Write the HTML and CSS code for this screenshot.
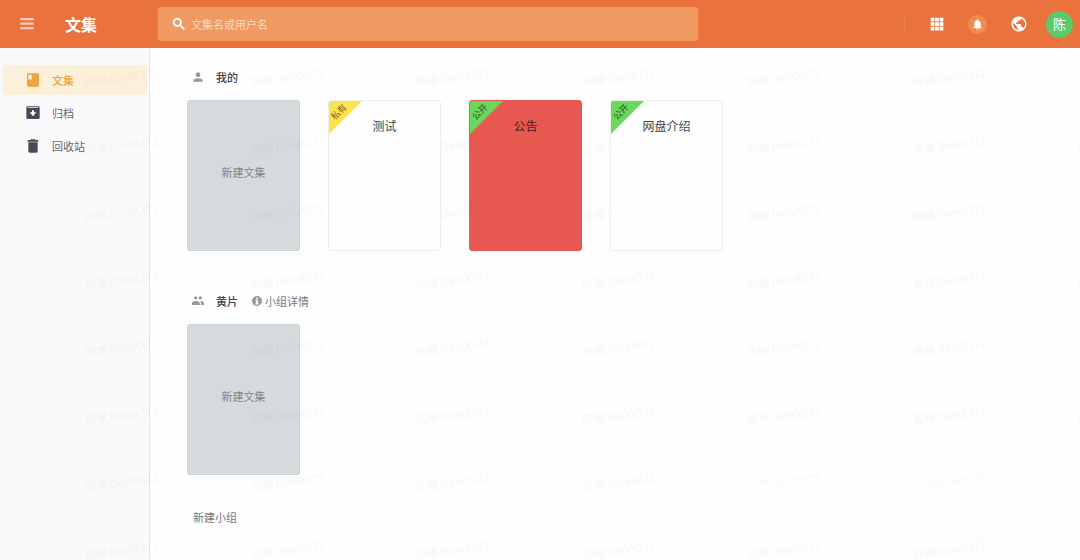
FILE: index.html
```
<!DOCTYPE html>
<html lang="zh-CN">
<head>
  <meta charset="UTF-8">
  <meta name="viewport" content="width=device-width, initial-scale=1.0">
  <title>文集</title>
  <link rel="stylesheet" href="styles.css">
</head>
<body>

  <header class="topbar">
    <div class="brand">
      <button class="menu-btn" aria-label="菜单">
        <svg viewBox="0 0 24 24"><path d="M3 19h18v-3H3v3zm0-6h18v-3H3v3zm0-9v3h18V4H3z"/></svg>
      </button>
      <h1>文集</h1>
    </div>
    <label class="search">
      <svg viewBox="0 0 24 24"><path d="M15.5 14h-.8l-.3-.3A6.5 6.5 0 1 0 13.7 14.400l.3.3v.8l5 5 1.500-1.500-5-5zm-6 0a4.500 4.500 0 1 1 0-9 4.500 4.500 0 0 1 0 9z"/></svg>
      <input type="text" placeholder="文集名或用户名" aria-label="搜索">
    </label>
    <div class="tools">
      <span class="divider"></span>
      <button class="tool" aria-label="应用">
        <svg viewBox="0 0 24 24"><path d="M3.500 8.500h5v-5h-5v5zm6 12h5v-5h-5v5zm-6 0h5v-5h-5v5zm0-6h5v-5h-5v5zm6 0h5v-5h-5v5zm6-11v5h5v-5h-5zm-6 5h5v-5h-5v5zm6 6h5v-5h-5v5zm0 6h5v-5h-5v5z"/></svg>
      </button>
      <button class="tool bell" aria-label="通知">
        <svg viewBox="0 0 24 24"><path d="M12 22c1.100 0 2-.9 2-2h-4c0 1.100.9 2 2 2zm6-6v-5c0-3.070-1.640-5.640-4.500-6.320V4c0-.83-.67-1.500-1.500-1.500s-1.500.67-1.500 1.500v.68C7.630 5.360 6 7.920 6 11v5l-2 2v1h16v-1l-2-2z"/></svg>
      </button>
      <button class="tool" aria-label="语言">
        <svg viewBox="0 0 24 24"><path d="M12 2C6.480 2 2 6.480 2 12s4.480 10 10 10 10-4.480 10-10S17.520 2 12 2zm-1 17.930c-3.950-.49-7-3.850-7-7.930 0-.62.08-1.210.21-1.790L9 15v1c0 1.100.9 2 2 2v1.930zm6.900-2.540c-.26-.81-1-1.390-1.900-1.390h-1v-3c0-.55-.45-1-1-1H8v-2h2c.55 0 1-.45 1-1V7h2c1.100 0 2-.9 2-2v-.41c2.930 1.190 5 4.060 5 7.410 0 2.080-.8 3.970-2.100 5.390z"/></svg>
      </button>
      <button class="avatar">陈</button>
    </div>
  </header>

  <div class="page">
    <nav class="sidebar">
      <a class="nav-item active" href="#">
        <svg viewBox="0 0 24 24"><path d="M19 2H5c-1.100 0-2 .9-2 2v16c0 1.100.9 2 2 2h14c1.100 0 2-.9 2-2V4c0-1.100-.9-2-2-2zM5 4h5v8l-2.500-1.500L5 12V4z"/></svg>
        文集
      </a>
      <a class="nav-item" href="#">
        <svg viewBox="0 0 24 24"><path d="M4 2h16a2 2 0 0 1 2 2v15a2 2 0 0 1-2 2H4a2 2 0 0 1-2-2V4c0-1.100.9-2 2-2zm0 1.500v1h16v-1H4zM10.500 8v3H7l5 6 5-6h-3.500V8h-3z"/></svg>
        归档
      </a>
      <a class="nav-item" href="#">
        <svg viewBox="0 0 24 24"><path d="M5 20c0 1.100.9 2 2 2h10c1.100 0 2-.9 2-2V6.500H5V20zM20 3h-4l-1-1H9L8 3H4v2.500h16V3z"/></svg>
        回收站
      </a>
    </nav>

    <main class="content">
      <section class="group">
        <div class="group-head">
          <svg viewBox="0 0 24 24"><path d="M12 12c2.210 0 4-1.790 4-4s-1.790-4-4-4-4 1.790-4 4 1.790 4 4 4zm0 2c-2.670 0-8 1.340-8 4v2h16v-2c0-2.660-5.330-4-8-4z"/></svg>
          <h2>我的</h2>
        </div>
        <div class="cards">
          <button class="card new">新建文集</button>
          <a class="card" href="#"><span class="ribbon private"><span>私有</span></span>测试</a>
          <a class="card red" href="#"><span class="ribbon"><span>公开</span></span>公告</a>
          <a class="card" href="#"><span class="ribbon"><span>公开</span></span>网盘介绍</a>
        </div>
      </section>

      <section class="group">
        <div class="group-head">
          <svg viewBox="0 0 24 24"><circle cx="8" cy="6.500" r="2.800"/><circle cx="16" cy="6.500" r="2.800"/><path d="M1.500 19v-3c0-2.500 4-4 6.800-4s6.700 1.500 6.700 4v3zM17 19v-3c0-1.500-.7-2.800-1.800-3.800 3 0 7.300 1.300 7.300 3.800v3z"/></svg>
          <h2>黄片</h2>
          <a class="detail" href="#">
            <svg viewBox="0 0 24 24"><path fill-rule="evenodd" d="M12 2a10 10 0 1 0 0 20 10 10 0 0 0 0-20zm-2 3.500h4v3h-4v-3zM9 10h5v6.500h1.500V19h-7v-2.500H10v-4H9V10z"/></svg>
            小组详情
          </a>
        </div>
        <div class="cards">
          <button class="card new">新建文集</button>
        </div>
      </section>

      <button class="new-group">新建小组</button>
    </main>

    <svg class="watermark" aria-hidden="true">
      <defs>
        <!-- two rows and two columns per tile -->
        <pattern id="mark" x="85" y="18" width="331" height="135" patternUnits="userSpaceOnUse">
          <text transform="translate(1 20) rotate(-7)">陈曦 DarkX372</text>
          <text transform="translate(167 20) rotate(-7)">陈曦 DarkX372</text>
          <text transform="translate(1 88) rotate(-7)">陈曦 DarkX372</text>
          <text transform="translate(167 88) rotate(-7)">陈曦 DarkX372</text>
        </pattern>
      </defs>
      <rect width="100%" height="100%" fill="url(#mark)"/>
    </svg>
    <div class="toast"></div>
  </div>

</body>
</html>
```
FILE: styles.css
```
* {
  box-sizing: border-box;
}

body {
  margin: 0;
  min-height: 100vh;
  display: flex;
  flex-direction: column;
  background: #fefefe;
  color: #444;
  font-family: "Noto Sans CJK SC", "Noto Sans", sans-serif;
  font-size: 11px;
  line-height: 20px;
}

button {
  padding: 0;
  border: none;
  background: none;
  color: inherit;
  font: inherit;
  cursor: pointer;
}

a {
  color: inherit;
  text-decoration: none;
}

svg {
  fill: currentColor;
  flex: none;
}

/* Top bar */
.topbar {
  display: flex;
  align-items: center;
  height: 48px;
  padding-right: 7px;
  background: #ea733d;
  color: #fff;
}

.brand {
  display: flex;
  align-items: center;
  gap: 29px;
  width: 158px;
  padding-left: 18px;
}

.brand h1 {
  margin: 0;
  font-size: 16px;
  font-weight: 700;
}

.menu-btn {
  display: flex;
  color: #f9ccb3;
}

.menu-btn svg {
  width: 18px;
  height: 18px;
}

.search {
  display: flex;
  align-items: center;
  gap: 4px;
  width: 50vw;
  height: 34px;
  padding: 0 13px;
  border-radius: 3px;
  background: #f09a62;
}

.search svg {
  width: 16px;
  height: 16px;
  stroke: #fff;
}

.search input {
  flex: 1;
  padding: 0;
  border: none;
  outline: none;
  background: none;
  color: #fff;
  font: inherit;
}

.search input::placeholder {
  color: #fbdac4;
  opacity: 1;
}

.tools {
  display: flex;
  align-items: center;
  gap: 14px;
  margin-left: auto;
}

.divider {
  width: 1px;
  height: 16px;
  margin-right: 4px;
  background: #ed8050;
}

.tool {
  display: flex;
  align-items: center;
  justify-content: center;
  width: 27px;
  height: 27px;
}

.tool svg {
  width: 18px;
  height: 18px;
}

.bell {
  width: 19px;
  height: 19px;
  margin: 0 4px;
  border-radius: 50%;
  background: #ef8b50;
}

.bell svg {
  width: 13px;
  height: 13px;
}

.avatar {
  width: 27px;
  height: 27px;
  border-radius: 50%;
  background: #5bca69;
  font-size: 13px;
}

/* Sidebar */
.page {
  display: flex;
  flex: 1;
  position: relative;
}

.sidebar {
  display: flex;
  flex-direction: column;
  gap: 3px;
  width: 150px;
  padding: 17px 2px 0 3px;
  border-right: 1px solid #e6e6e6;
  background: #fafafa;
}

.nav-item {
  display: flex;
  align-items: center;
  gap: 11px;
  height: 30px;
  padding-left: 22px;
  border-radius: 3px;
  color: #666;
}

.nav-item svg {
  width: 16px;
  height: 16px;
  fill: #474958;
}

.nav-item.active {
  background: #fdf0da;
  color: #eda33f;
  font-weight: 500;
}

.nav-item.active svg {
  fill: #eda33f;
}

/* Content */
.content {
  flex: 1;
  padding: 19px 37px;
}

.group {
  margin-bottom: 40px;
}

.group-head {
  display: flex;
  align-items: center;
  margin-bottom: 13px;
  padding-left: 4px;
}

.group-head svg {
  width: 14px;
  height: 14px;
  fill: #999;
}

.group-head h2 {
  margin: 0 13px 0 11px;
  color: #444;
  font-size: 11px;
  font-weight: 500;
}

.detail {
  display: flex;
  align-items: center;
  gap: 2px;
  color: #777;
}

.detail svg {
  width: 12px;
  height: 12px;
}

.cards {
  display: flex;
  flex-wrap: wrap;
  gap: 28px;
}

.card {
  position: relative;
  z-index: 1;
  width: 113px;
  height: 151px;
  padding-top: 15px;
  border: 1px solid #efefef;
  border-radius: 3px;
  overflow: hidden;
  background: #fefefe;
  color: #444;
  font-size: 12px;
  text-align: center;
}

.card.new {
  z-index: auto;
  padding: 0 0 8px;
  border-color: #ced2d4;
  background: #d5dadd;
  color: #858585;
  font-size: 11px;
}

.card.red {
  border-color: #e75851;
  background: #e75851;
  color: #42201e;
}

/* Corner ribbon */
.ribbon {
  position: absolute;
  top: -1px;
  left: -1px;
  display: grid;
  width: 35px;
  height: 35px;
  padding: 0 12px 12px 0;
  place-items: center;
  clip-path: polygon(0 0, 100% 0, 0 100%);
  background: #6bd85b;
  color: #2b5525;
  font-size: 9px;
  line-height: 12px;
  white-space: nowrap;
}

.ribbon span {
  transform: rotate(-45deg);
}

.ribbon.private {
  background: #fde34d;
  color: #8c6420;
}

.new-group {
  display: block;
  margin: -8px 0 0 6px;
  color: #777;
}

/* Page overlays */
.watermark {
  position: absolute;
  inset: 0;
  width: 100%;
  height: 100%;
  pointer-events: none;
}

.watermark text {
  fill: #000;
  fill-opacity: 0.03;
  font-size: 11px;
}

.toast {
  position: absolute;
  right: 15px;
  bottom: 18px;
  width: 353px;
  height: 60px;
  border-radius: 30px;
  background: #fdfdfd;
  pointer-events: none;
}
```
